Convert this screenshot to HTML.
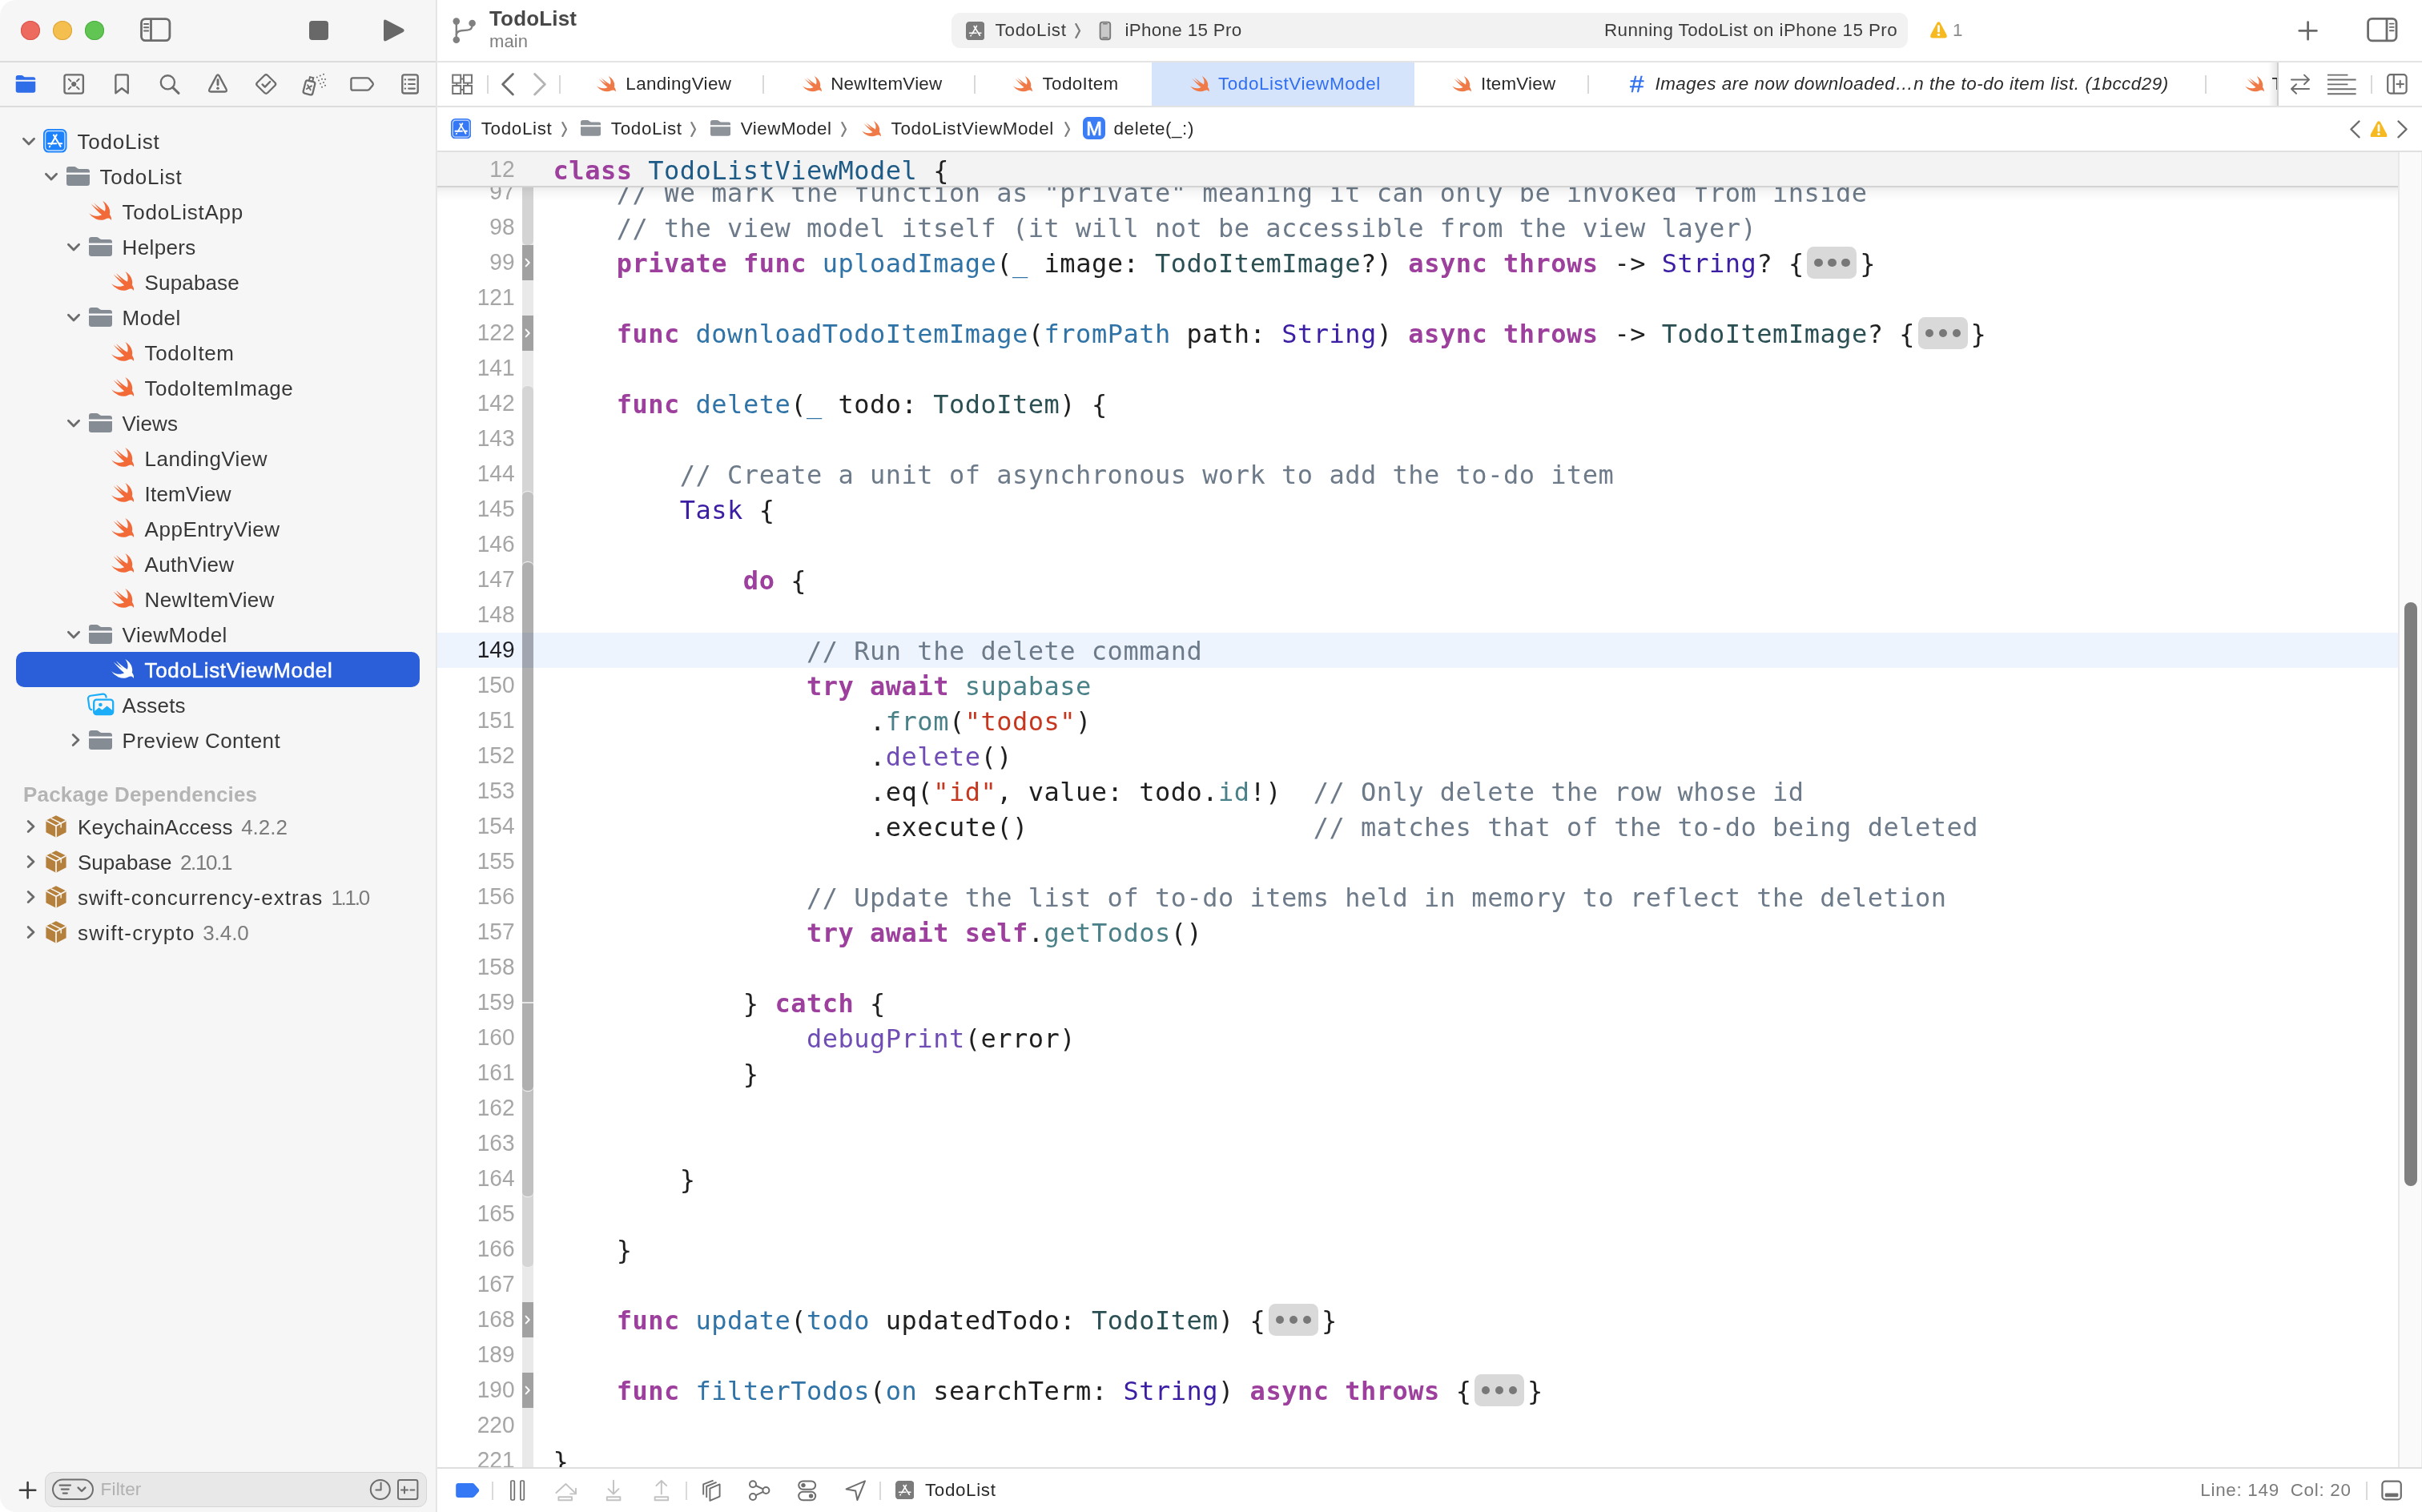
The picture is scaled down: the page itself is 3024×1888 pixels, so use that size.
<!DOCTYPE html>
<html><head><meta charset="utf-8"><title>TodoList — TodoListViewModel.swift</title>
<style>
html,body{margin:0;padding:0;background:#fff}
body{width:3024px;height:1888px;position:relative;overflow:hidden;font-family:"Liberation Sans",sans-serif;color:#262626}
.a{position:absolute;display:block}
.t{position:absolute;white-space:pre;line-height:0;margin-top:-0.3465em}
.box{position:absolute}
/* text classes */
.side{font-size:26px;letter-spacing:.62px;color:#383838}
.sidew{font-size:26px;letter-spacing:.62px;color:#fff;-webkit-text-stroke:.5px #fff}
.ver{font-size:26px;letter-spacing:.3px;color:#7c7c7c}
.pkg{font-size:26px;font-weight:bold;letter-spacing:0px;color:#b4b4b4}
.ui{font-size:22.4px;letter-spacing:.22px;color:#2a2a2a}
.uib{font-size:22.4px;letter-spacing:.22px;color:#2f6ff0}
.uii{font-size:22.4px;font-style:italic;letter-spacing:.26px;color:#2a2a2a}
.pill{font-size:22.4px;letter-spacing:.1px;color:#3d3d3d}
.ttl{font-size:26px;font-weight:bold;color:#484848;letter-spacing:.1px}
.sub{font-size:22px;color:#7f7f7f}
.stat{font-size:22.4px;letter-spacing:.45px;color:#7b7b7b}
.flt{font-size:22.6px;color:#b1b1b1}
.ln{position:absolute;left:560px;width:82.6px;text-align:right;font-size:30.4px;color:#a6a6a6;line-height:44px;height:44px;transform:scaleX(.925);transform-origin:100% 50%}
.ln.cur{color:#1f1f24}
.cl{position:absolute;left:690.6px;height:44px;line-height:44px;white-space:pre;font-family:"DejaVu Sans Mono","Liberation Mono",monospace;font-size:32px;letter-spacing:.506px;color:#1f1f1f}
.k{color:#9d3f9d;font-weight:bold}
.c{color:#6c7a89}
.s{color:#c5371f}
.fd{color:#2f73a7}
.td{color:#1d5a85}
.pt{color:#2b5054}
.pf{color:#4a8188}
.ot{color:#3b1ea3}
.of{color:#6f4db5}
.fp{display:inline-block;vertical-align:top;width:62px;height:40px;margin:1px 3.8px 0 3.7px;border-radius:8.5px;background:#d9d9d9;position:relative}
.fp i{position:absolute;top:15px;width:10.4px;height:10.4px;border-radius:50%;background:#787878}
</style></head><body><div id="w" style="position:absolute;left:0;top:0;width:3024px;height:1888px;will-change:transform">

<div class="box" style="left:0;top:0;width:545px;height:1888px;background:#f6f6f6;border-radius:20px 0 0 20px"></div>
<div class="box" style="left:544px;top:0;width:2px;height:1888px;background:linear-gradient(90deg,#dedede,#ececec)"></div>
<div class="box" style="left:0;top:76px;width:544px;height:2px;background:#dcdcdc"></div>
<div class="box" style="left:546px;top:76px;width:2478px;height:2px;background:#e4e4e4"></div>
<div class="box" style="left:0;top:132px;width:544px;height:2px;background:#dcdcdc"></div>
<div class="box" style="left:26px;top:26px;width:24px;height:24px;border-radius:50%;background:#ed6a5e;box-shadow:inset 0 0 0 1px #d9564b"></div>
<div class="box" style="left:66px;top:26px;width:24px;height:24px;border-radius:50%;background:#f5bf4f;box-shadow:inset 0 0 0 1px #dca53a"></div>
<div class="box" style="left:106px;top:26px;width:24px;height:24px;border-radius:50%;background:#61c554;box-shadow:inset 0 0 0 1px #4fae43"></div>
<svg class="a" style="left:173px;top:20px" width="42" height="34" viewBox="173 20 42 34" ><rect x="176.5" y="23.6" width="35.4" height="27" rx="5" fill="none" stroke="#6c6c6c" stroke-width="2.8"/><path d="M188.5 23.6V50.6" stroke="#6c6c6c" stroke-width="2.8"/><path d="M180 30H185.2M180 34.3H185.2M180 38.6H185.2" stroke="#6c6c6c" stroke-width="2" stroke-linecap="round"/></svg>
<div class="box" style="left:386px;top:26px;width:24px;height:24px;border-radius:4px;background:#686868"></div>
<svg class="a" style="left:476px;top:22px" width="32" height="32" viewBox="476 22 32 32" ><path d="M479 27 V49 Q479 52.6 482.2 51 L503.4 40 Q505.8 38 503.4 36 L482.2 25 Q479 23.4 479 27Z" fill="#686868"/></svg>
<svg class="a" style="left:19px;top:94.2px" width="26" height="21.8" viewBox="0 0 27 24" ><path d="M0 4.4V3Q0 0 3 0H7.6Q9.2 0 10.3 1L11.2 1.8Q12 2.5 13.4 2.5H24Q27 2.5 27 5.5V6.2H0Z" fill="#2f6de9"/><path d="M0 8.4H27V21Q27 24 24 24H3Q0 24 0 21Z" fill="#2f6de9"/></svg>
<svg class="a" style="left:78px;top:91px" width="29" height="28" viewBox="78 91 29 28" ><rect x="80.5" y="93.4" width="23.4" height="23.2" rx="2.6" fill="none" stroke="#6d6d6d" stroke-width="2.35"/><circle cx="92.2" cy="105" r="3.1" fill="#6d6d6d"/><path d="M85.8 98.8 L88.4 101.4 M98.6 98.8 L96 101.4 M85.8 111.2 L88.4 108.6 M98.6 111.2 L96 108.6" stroke="#6d6d6d" stroke-width="2" stroke-linecap="round"/></svg>
<svg class="a" style="left:141px;top:90px" width="22" height="30" viewBox="141 90 22 30" ><path d="M144.4 116.2 V95.4 Q144.4 93.4 146.4 93.4 H157.8 Q159.8 93.4 159.8 95.4 V116.2 L152.1 110.2 Z" fill="none" stroke="#6d6d6d" stroke-width="2.35" stroke-linejoin="round"/></svg>
<svg class="a" style="left:198px;top:91px" width="28" height="28" viewBox="198 91 28 28" ><circle cx="209.4" cy="102.8" r="8.6" fill="none" stroke="#6d6d6d" stroke-width="2.35"/><path d="M215.8 109.4 L223 116.4" stroke="#6d6d6d" stroke-width="3" stroke-linecap="round"/></svg>
<svg class="a" style="left:258px;top:90px" width="28" height="28" viewBox="258 90 28 28" ><path d="M270.4 94.6 Q272 92 273.6 94.6 L282.5 111.4 Q283.9 114.5 280.8 114.5 H263.2 Q260.1 114.5 261.5 111.4 Z" fill="none" stroke="#6d6d6d" stroke-width="2.3" stroke-linejoin="round"/><path d="M272 99.8 V105.8" stroke="#6d6d6d" stroke-width="2.9" stroke-linecap="round"/><circle cx="272" cy="110.2" r="1.75" fill="#6d6d6d"/></svg>
<svg class="a" style="left:317px;top:90px" width="30" height="30" viewBox="317 90 30 30" ><path d="M330.4 94 Q332.2 92.4 334 94 L343.4 103.2 Q345 105 343.4 106.8 L334 116 Q332.2 117.6 330.4 116 L321 106.8 Q319.4 105 321 103.2 Z" fill="none" stroke="#6d6d6d" stroke-width="2.3" stroke-linejoin="round"/><path d="M327.6 105.4 L330.8 108.6 L337.2 102" fill="none" stroke="#6d6d6d" stroke-width="2.4" stroke-linecap="round" stroke-linejoin="round"/></svg>
<svg class="a" style="left:376px;top:90px" width="34" height="30" viewBox="376 90 34 30" ><g transform="rotate(14 386 106) translate(0.8 0.6)"><rect x="380" y="100.4" width="12" height="16.6" rx="2.6" fill="none" stroke="#6d6d6d" stroke-width="2.3"/><rect x="383.8" y="95.6" width="4.4" height="4.8" fill="none" stroke="#6d6d6d" stroke-width="2"/><path d="M383.4 106 L388.4 111 M388.4 106 L383.4 111" stroke="#6d6d6d" stroke-width="1.9" stroke-linecap="round"/></g><g fill="#6d6d6d"><circle cx="395.8" cy="96.6" r="1"/><circle cx="399.8" cy="94.6" r="1"/><circle cx="404" cy="92.8" r="1"/><circle cx="398" cy="100.4" r="1"/><circle cx="402" cy="98.8" r="1"/><circle cx="406" cy="99" r="1"/><circle cx="400" cy="104.6" r="1"/><circle cx="404" cy="103" r="1"/><circle cx="406" cy="106.8" r="1"/><circle cx="402" cy="108.8" r="1"/></g></svg>
<svg class="a" style="left:435px;top:94px" width="34" height="22" viewBox="435 94 34 22" ><path d="M440.6 97.4 H458.8 Q460.4 97.4 461.4 98.7 L465.4 103.6 Q466.4 105 465.4 106.4 L461.4 111.3 Q460.4 112.6 458.8 112.6 H440.6 Q438.4 112.6 438.4 110.4 V99.6 Q438.4 97.4 440.6 97.4 Z" fill="none" stroke="#6d6d6d" stroke-width="2.35" stroke-linejoin="round"/></svg>
<svg class="a" style="left:499px;top:90px" width="26" height="30" viewBox="499 90 26 30" ><rect x="502.3" y="93.3" width="19.4" height="23.2" rx="2.6" fill="none" stroke="#6d6d6d" stroke-width="2.35"/><path d="M510.2 99.4H517.8M510.2 105H517.8M510.2 110.6H517.8" stroke="#6d6d6d" stroke-width="2.2" stroke-linecap="round"/><path d="M505.8 99.4H506M505.8 105H506M505.8 110.6H506" stroke="#6d6d6d" stroke-width="2.3" stroke-linecap="round"/></svg>
<svg class="a" style="left:27px;top:171px" width="18" height="12" viewBox="0 0 18 12" ><path d="M2.4 2.2 L9 9 L15.6 2.2" fill="none" stroke="#6b6b6b" stroke-width="2.8" stroke-linecap="round" stroke-linejoin="round"/></svg>
<svg class="a" style="left:54.2px;top:161px" width="29.5" height="29.5" viewBox="0 0 30 30" ><rect x="0" y="0" width="30" height="30" rx="6.5" fill="#1b82fc"/><rect x="2.6" y="2.6" width="24.8" height="24.8" rx="4.2" fill="none" stroke="#fff" stroke-opacity=".75" stroke-width="1.4"/><g stroke="#fff" stroke-width="2.1" stroke-linecap="round" fill="none"><path d="M17 7.4 L10.2 19.4"/><path d="M13.3 7.8 L21.9 22.2"/><path d="M6.4 18.6 H16.6"/><path d="M20.4 18.6 H23.6"/><path d="M8.4 22 L8.0 22.7"/></g></svg>
<div class="t side" style="left:96.60px;top:186px;letter-spacing:0.750px;">TodoList</div>
<svg class="a" style="left:55px;top:215px" width="18" height="12" viewBox="0 0 18 12" ><path d="M2.4 2.2 L9 9 L15.6 2.2" fill="none" stroke="#6b6b6b" stroke-width="2.8" stroke-linecap="round" stroke-linejoin="round"/></svg>
<svg class="a" style="left:83px;top:208px" width="29" height="24" viewBox="0 0 29 24" preserveAspectRatio="none"><path d="M0 5.2V3.2Q0 0 3.2 0H9.3Q11 0 12.2 1.1L13.3 2.1Q14.2 2.9 15.6 2.9H25.8Q29 2.9 29 6.1V7.5H0Z" fill="#868c93"/><path d="M0 9.9H29V20.8Q29 24 25.8 24H3.2Q0 24 0 20.8Z" fill="#868c93"/></svg>
<div class="t side" style="left:124.60px;top:230px;letter-spacing:0.750px;">TodoList</div>
<svg class="a" style="left:110.8px;top:250.8px" width="28.3" height="24.6" viewBox="2.35 3.35 18.3 16.8" preserveAspectRatio="none"><path d="M13.543 3.41c4.114 2.47 6.545 7.162 5.549 11.131-.024.093-.05.181-.076.272l.002.001c2.062 2.538 1.5 5.258 1.236 4.745-1.072-2.086-3.066-1.568-4.088-1.043a6.803 6.803 0 0 1-.281.158l-.02.012-.002.002c-2.115 1.123-4.957 1.205-7.812-.022a12.568 12.568 0 0 1-5.64-4.838c.649.48 1.35.902 2.097 1.252 3.019 1.414 6.051 1.311 8.197-.002C9.651 12.73 7.101 9.67 5.146 7.191a10.628 10.628 0 0 1-1.005-1.384c2.34 2.142 6.038 4.83 7.365 5.576C8.69 8.408 6.208 4.743 6.324 4.86c4.436 4.47 8.528 6.996 8.528 6.996.154.085.27.154.36.213.085-.215.16-.437.224-.668.708-2.588-.09-5.548-1.893-7.992z" fill="#f26a38"/></svg>
<div class="t side" style="left:152.60px;top:274px;letter-spacing:0.750px;">TodoListApp</div>
<svg class="a" style="left:83px;top:303px" width="18" height="12" viewBox="0 0 18 12" ><path d="M2.4 2.2 L9 9 L15.6 2.2" fill="none" stroke="#6b6b6b" stroke-width="2.8" stroke-linecap="round" stroke-linejoin="round"/></svg>
<svg class="a" style="left:111px;top:296px" width="29" height="24" viewBox="0 0 29 24" preserveAspectRatio="none"><path d="M0 5.2V3.2Q0 0 3.2 0H9.3Q11 0 12.2 1.1L13.3 2.1Q14.2 2.9 15.6 2.9H25.8Q29 2.9 29 6.1V7.5H0Z" fill="#868c93"/><path d="M0 9.9H29V20.8Q29 24 25.8 24H3.2Q0 24 0 20.8Z" fill="#868c93"/></svg>
<div class="t side" style="left:152.60px;top:318px;letter-spacing:0.351px;">Helpers</div>
<svg class="a" style="left:138.8px;top:338.8px" width="28.3" height="24.6" viewBox="2.35 3.35 18.3 16.8" preserveAspectRatio="none"><path d="M13.543 3.41c4.114 2.47 6.545 7.162 5.549 11.131-.024.093-.05.181-.076.272l.002.001c2.062 2.538 1.5 5.258 1.236 4.745-1.072-2.086-3.066-1.568-4.088-1.043a6.803 6.803 0 0 1-.281.158l-.02.012-.002.002c-2.115 1.123-4.957 1.205-7.812-.022a12.568 12.568 0 0 1-5.64-4.838c.649.48 1.35.902 2.097 1.252 3.019 1.414 6.051 1.311 8.197-.002C9.651 12.73 7.101 9.67 5.146 7.191a10.628 10.628 0 0 1-1.005-1.384c2.34 2.142 6.038 4.83 7.365 5.576C8.69 8.408 6.208 4.743 6.324 4.86c4.436 4.47 8.528 6.996 8.528 6.996.154.085.27.154.36.213.085-.215.16-.437.224-.668.708-2.588-.09-5.548-1.893-7.992z" fill="#f26a38"/></svg>
<div class="t side" style="left:180.60px;top:362px;letter-spacing:0.142px;">Supabase</div>
<svg class="a" style="left:83px;top:391px" width="18" height="12" viewBox="0 0 18 12" ><path d="M2.4 2.2 L9 9 L15.6 2.2" fill="none" stroke="#6b6b6b" stroke-width="2.8" stroke-linecap="round" stroke-linejoin="round"/></svg>
<svg class="a" style="left:111px;top:384px" width="29" height="24" viewBox="0 0 29 24" preserveAspectRatio="none"><path d="M0 5.2V3.2Q0 0 3.2 0H9.3Q11 0 12.2 1.1L13.3 2.1Q14.2 2.9 15.6 2.9H25.8Q29 2.9 29 6.1V7.5H0Z" fill="#868c93"/><path d="M0 9.9H29V20.8Q29 24 25.8 24H3.2Q0 24 0 20.8Z" fill="#868c93"/></svg>
<div class="t side" style="left:152.60px;top:406px;letter-spacing:0.469px;">Model</div>
<svg class="a" style="left:138.8px;top:426.8px" width="28.3" height="24.6" viewBox="2.35 3.35 18.3 16.8" preserveAspectRatio="none"><path d="M13.543 3.41c4.114 2.47 6.545 7.162 5.549 11.131-.024.093-.05.181-.076.272l.002.001c2.062 2.538 1.5 5.258 1.236 4.745-1.072-2.086-3.066-1.568-4.088-1.043a6.803 6.803 0 0 1-.281.158l-.02.012-.002.002c-2.115 1.123-4.957 1.205-7.812-.022a12.568 12.568 0 0 1-5.64-4.838c.649.48 1.35.902 2.097 1.252 3.019 1.414 6.051 1.311 8.197-.002C9.651 12.73 7.101 9.67 5.146 7.191a10.628 10.628 0 0 1-1.005-1.384c2.34 2.142 6.038 4.83 7.365 5.576C8.69 8.408 6.208 4.743 6.324 4.86c4.436 4.47 8.528 6.996 8.528 6.996.154.085.27.154.36.213.085-.215.16-.437.224-.668.708-2.588-.09-5.548-1.893-7.992z" fill="#f26a38"/></svg>
<div class="t side" style="left:180.60px;top:450px;letter-spacing:0.637px;">TodoItem</div>
<svg class="a" style="left:138.8px;top:470.8px" width="28.3" height="24.6" viewBox="2.35 3.35 18.3 16.8" preserveAspectRatio="none"><path d="M13.543 3.41c4.114 2.47 6.545 7.162 5.549 11.131-.024.093-.05.181-.076.272l.002.001c2.062 2.538 1.5 5.258 1.236 4.745-1.072-2.086-3.066-1.568-4.088-1.043a6.803 6.803 0 0 1-.281.158l-.02.012-.002.002c-2.115 1.123-4.957 1.205-7.812-.022a12.568 12.568 0 0 1-5.64-4.838c.649.48 1.35.902 2.097 1.252 3.019 1.414 6.051 1.311 8.197-.002C9.651 12.73 7.101 9.67 5.146 7.191a10.628 10.628 0 0 1-1.005-1.384c2.34 2.142 6.038 4.83 7.365 5.576C8.69 8.408 6.208 4.743 6.324 4.86c4.436 4.47 8.528 6.996 8.528 6.996.154.085.27.154.36.213.085-.215.16-.437.224-.668.708-2.588-.09-5.548-1.893-7.992z" fill="#f26a38"/></svg>
<div class="t side" style="left:180.60px;top:494px;letter-spacing:0.499px;">TodoItemImage</div>
<svg class="a" style="left:83px;top:523px" width="18" height="12" viewBox="0 0 18 12" ><path d="M2.4 2.2 L9 9 L15.6 2.2" fill="none" stroke="#6b6b6b" stroke-width="2.8" stroke-linecap="round" stroke-linejoin="round"/></svg>
<svg class="a" style="left:111px;top:516px" width="29" height="24" viewBox="0 0 29 24" preserveAspectRatio="none"><path d="M0 5.2V3.2Q0 0 3.2 0H9.3Q11 0 12.2 1.1L13.3 2.1Q14.2 2.9 15.6 2.9H25.8Q29 2.9 29 6.1V7.5H0Z" fill="#868c93"/><path d="M0 9.9H29V20.8Q29 24 25.8 24H3.2Q0 24 0 20.8Z" fill="#868c93"/></svg>
<div class="t side" style="left:152.60px;top:538px;letter-spacing:0.132px;">Views</div>
<svg class="a" style="left:138.8px;top:558.8px" width="28.3" height="24.6" viewBox="2.35 3.35 18.3 16.8" preserveAspectRatio="none"><path d="M13.543 3.41c4.114 2.47 6.545 7.162 5.549 11.131-.024.093-.05.181-.076.272l.002.001c2.062 2.538 1.5 5.258 1.236 4.745-1.072-2.086-3.066-1.568-4.088-1.043a6.803 6.803 0 0 1-.281.158l-.02.012-.002.002c-2.115 1.123-4.957 1.205-7.812-.022a12.568 12.568 0 0 1-5.64-4.838c.649.48 1.35.902 2.097 1.252 3.019 1.414 6.051 1.311 8.197-.002C9.651 12.73 7.101 9.67 5.146 7.191a10.628 10.628 0 0 1-1.005-1.384c2.34 2.142 6.038 4.83 7.365 5.576C8.69 8.408 6.208 4.743 6.324 4.86c4.436 4.47 8.528 6.996 8.528 6.996.154.085.27.154.36.213.085-.215.16-.437.224-.668.708-2.588-.09-5.548-1.893-7.992z" fill="#f26a38"/></svg>
<div class="t side" style="left:180.60px;top:582px;letter-spacing:0.451px;">LandingView</div>
<svg class="a" style="left:138.8px;top:602.8px" width="28.3" height="24.6" viewBox="2.35 3.35 18.3 16.8" preserveAspectRatio="none"><path d="M13.543 3.41c4.114 2.47 6.545 7.162 5.549 11.131-.024.093-.05.181-.076.272l.002.001c2.062 2.538 1.5 5.258 1.236 4.745-1.072-2.086-3.066-1.568-4.088-1.043a6.803 6.803 0 0 1-.281.158l-.02.012-.002.002c-2.115 1.123-4.957 1.205-7.812-.022a12.568 12.568 0 0 1-5.64-4.838c.649.48 1.35.902 2.097 1.252 3.019 1.414 6.051 1.311 8.197-.002C9.651 12.73 7.101 9.67 5.146 7.191a10.628 10.628 0 0 1-1.005-1.384c2.34 2.142 6.038 4.83 7.365 5.576C8.69 8.408 6.208 4.743 6.324 4.86c4.436 4.47 8.528 6.996 8.528 6.996.154.085.27.154.36.213.085-.215.16-.437.224-.668.708-2.588-.09-5.548-1.893-7.992z" fill="#f26a38"/></svg>
<div class="t side" style="left:180.60px;top:626px;letter-spacing:0.197px;">ItemView</div>
<svg class="a" style="left:138.8px;top:646.8px" width="28.3" height="24.6" viewBox="2.35 3.35 18.3 16.8" preserveAspectRatio="none"><path d="M13.543 3.41c4.114 2.47 6.545 7.162 5.549 11.131-.024.093-.05.181-.076.272l.002.001c2.062 2.538 1.5 5.258 1.236 4.745-1.072-2.086-3.066-1.568-4.088-1.043a6.803 6.803 0 0 1-.281.158l-.02.012-.002.002c-2.115 1.123-4.957 1.205-7.812-.022a12.568 12.568 0 0 1-5.64-4.838c.649.48 1.35.902 2.097 1.252 3.019 1.414 6.051 1.311 8.197-.002C9.651 12.73 7.101 9.67 5.146 7.191a10.628 10.628 0 0 1-1.005-1.384c2.34 2.142 6.038 4.83 7.365 5.576C8.69 8.408 6.208 4.743 6.324 4.86c4.436 4.47 8.528 6.996 8.528 6.996.154.085.27.154.36.213.085-.215.16-.437.224-.668.708-2.588-.09-5.548-1.893-7.992z" fill="#f26a38"/></svg>
<div class="t side" style="left:180.60px;top:670px;letter-spacing:0.517px;">AppEntryView</div>
<svg class="a" style="left:138.8px;top:690.8px" width="28.3" height="24.6" viewBox="2.35 3.35 18.3 16.8" preserveAspectRatio="none"><path d="M13.543 3.41c4.114 2.47 6.545 7.162 5.549 11.131-.024.093-.05.181-.076.272l.002.001c2.062 2.538 1.5 5.258 1.236 4.745-1.072-2.086-3.066-1.568-4.088-1.043a6.803 6.803 0 0 1-.281.158l-.02.012-.002.002c-2.115 1.123-4.957 1.205-7.812-.022a12.568 12.568 0 0 1-5.64-4.838c.649.48 1.35.902 2.097 1.252 3.019 1.414 6.051 1.311 8.197-.002C9.651 12.73 7.101 9.67 5.146 7.191a10.628 10.628 0 0 1-1.005-1.384c2.34 2.142 6.038 4.83 7.365 5.576C8.69 8.408 6.208 4.743 6.324 4.86c4.436 4.47 8.528 6.996 8.528 6.996.154.085.27.154.36.213.085-.215.16-.437.224-.668.708-2.588-.09-5.548-1.893-7.992z" fill="#f26a38"/></svg>
<div class="t side" style="left:180.60px;top:714px;letter-spacing:0.295px;">AuthView</div>
<svg class="a" style="left:138.8px;top:734.8px" width="28.3" height="24.6" viewBox="2.35 3.35 18.3 16.8" preserveAspectRatio="none"><path d="M13.543 3.41c4.114 2.47 6.545 7.162 5.549 11.131-.024.093-.05.181-.076.272l.002.001c2.062 2.538 1.5 5.258 1.236 4.745-1.072-2.086-3.066-1.568-4.088-1.043a6.803 6.803 0 0 1-.281.158l-.02.012-.002.002c-2.115 1.123-4.957 1.205-7.812-.022a12.568 12.568 0 0 1-5.64-4.838c.649.48 1.35.902 2.097 1.252 3.019 1.414 6.051 1.311 8.197-.002C9.651 12.73 7.101 9.67 5.146 7.191a10.628 10.628 0 0 1-1.005-1.384c2.34 2.142 6.038 4.83 7.365 5.576C8.69 8.408 6.208 4.743 6.324 4.86c4.436 4.47 8.528 6.996 8.528 6.996.154.085.27.154.36.213.085-.215.16-.437.224-.668.708-2.588-.09-5.548-1.893-7.992z" fill="#f26a38"/></svg>
<div class="t side" style="left:180.60px;top:758px;letter-spacing:0.325px;">NewItemView</div>
<svg class="a" style="left:83px;top:787px" width="18" height="12" viewBox="0 0 18 12" ><path d="M2.4 2.2 L9 9 L15.6 2.2" fill="none" stroke="#6b6b6b" stroke-width="2.8" stroke-linecap="round" stroke-linejoin="round"/></svg>
<svg class="a" style="left:111px;top:780px" width="29" height="24" viewBox="0 0 29 24" preserveAspectRatio="none"><path d="M0 5.2V3.2Q0 0 3.2 0H9.3Q11 0 12.2 1.1L13.3 2.1Q14.2 2.9 15.6 2.9H25.8Q29 2.9 29 6.1V7.5H0Z" fill="#868c93"/><path d="M0 9.9H29V20.8Q29 24 25.8 24H3.2Q0 24 0 20.8Z" fill="#868c93"/></svg>
<div class="t side" style="left:152.60px;top:802px;letter-spacing:0.513px;">ViewModel</div>
<div class="box" style="left:20px;top:814px;width:504px;height:44px;border-radius:10px;background:#2b5fda"></div>
<svg class="a" style="left:138.8px;top:822.8px" width="28.3" height="24.6" viewBox="2.35 3.35 18.3 16.8" preserveAspectRatio="none"><path d="M13.543 3.41c4.114 2.47 6.545 7.162 5.549 11.131-.024.093-.05.181-.076.272l.002.001c2.062 2.538 1.5 5.258 1.236 4.745-1.072-2.086-3.066-1.568-4.088-1.043a6.803 6.803 0 0 1-.281.158l-.02.012-.002.002c-2.115 1.123-4.957 1.205-7.812-.022a12.568 12.568 0 0 1-5.64-4.838c.649.48 1.35.902 2.097 1.252 3.019 1.414 6.051 1.311 8.197-.002C9.651 12.73 7.101 9.67 5.146 7.191a10.628 10.628 0 0 1-1.005-1.384c2.34 2.142 6.038 4.83 7.365 5.576C8.69 8.408 6.208 4.743 6.324 4.86c4.436 4.47 8.528 6.996 8.528 6.996.154.085.27.154.36.213.085-.215.16-.437.224-.668.708-2.588-.09-5.548-1.893-7.992z" fill="#fff"/></svg>
<div class="t sidew" style="left:180.60px;top:846px;letter-spacing:0.659px;">TodoListViewModel</div>
<svg class="a" style="left:109px;top:865px" width="35" height="30" viewBox="0 0 35 30" ><rect x="1.6" y="2.6" width="22.6" height="17.6" rx="3.6" fill="#f6f6f6" stroke="#1badf8" stroke-width="2.2" transform="rotate(-8 13 11)"/><rect x="8.2" y="8.6" width="24" height="18.6" rx="3.4" fill="#dff3fe" stroke="#f6f6f6" stroke-width="4"/><rect x="8.2" y="8.6" width="24" height="18.6" rx="3.4" fill="#f6f6f6" stroke="#1badf8" stroke-width="2.3"/><circle cx="16.4" cy="15" r="2.3" fill="#1badf8"/><path d="M8.4 23.6 L14.6 18.6 L18.6 21.6 L24.6 16.4 L32 22.6 V25 Q32 27.2 29.8 27.2 H10.6 Q8.4 27.2 8.4 25Z" fill="#1badf8"/></svg>
<div class="t side" style="left:152.60px;top:890px;letter-spacing:0.195px;">Assets</div>
<svg class="a" style="left:88.5px;top:915px" width="12" height="18" viewBox="0 0 12 18" ><path d="M2.2 2.4 L9 9 L2.2 15.6" fill="none" stroke="#6b6b6b" stroke-width="2.8" stroke-linecap="round" stroke-linejoin="round"/></svg>
<svg class="a" style="left:111px;top:912px" width="29" height="24" viewBox="0 0 29 24" preserveAspectRatio="none"><path d="M0 5.2V3.2Q0 0 3.2 0H9.3Q11 0 12.2 1.1L13.3 2.1Q14.2 2.9 15.6 2.9H25.8Q29 2.9 29 6.1V7.5H0Z" fill="#868c93"/><path d="M0 9.9H29V20.8Q29 24 25.8 24H3.2Q0 24 0 20.8Z" fill="#868c93"/></svg>
<div class="t side" style="left:152.60px;top:934px;letter-spacing:0.453px;">Preview Content</div>
<div class="t pkg" style="left:29.10px;top:1001px;letter-spacing:0.150px;">Package Dependencies</div>
<svg class="a" style="left:32.6px;top:1023px" width="12" height="18" viewBox="0 0 12 18" ><path d="M2.2 2.4 L9 9 L2.2 15.6" fill="none" stroke="#6b6b6b" stroke-width="2.8" stroke-linecap="round" stroke-linejoin="round"/></svg>
<svg class="a" style="left:56px;top:1017px" width="28" height="30" viewBox="0 0 28 30" ><path d="M14 1.2 L26.6 7.6 V22.2 L14 28.8 L1.4 22.2 V7.6 Z" fill="#b5803c"/><path d="M1.4 7.6 L14 14.2 L26.6 7.6 M14 14.2 V28.8" fill="none" stroke="#f6f6f6" stroke-width="1.7"/><path d="M7.4 4.6 L20.2 11 V16.4" fill="none" stroke="#f6f6f6" stroke-width="1.5"/></svg>
<div class="t side" style="left:96.90px;top:1042px;letter-spacing:0.218px;">KeychainAccess</div>
<div class="t ver" style="left:301.20px;top:1042px;letter-spacing:-0.031px;">4.2.2</div>
<svg class="a" style="left:32.6px;top:1067px" width="12" height="18" viewBox="0 0 12 18" ><path d="M2.2 2.4 L9 9 L2.2 15.6" fill="none" stroke="#6b6b6b" stroke-width="2.8" stroke-linecap="round" stroke-linejoin="round"/></svg>
<svg class="a" style="left:56px;top:1061px" width="28" height="30" viewBox="0 0 28 30" ><path d="M14 1.2 L26.6 7.6 V22.2 L14 28.8 L1.4 22.2 V7.6 Z" fill="#b5803c"/><path d="M1.4 7.6 L14 14.2 L26.6 7.6 M14 14.2 V28.8" fill="none" stroke="#f6f6f6" stroke-width="1.7"/><path d="M7.4 4.6 L20.2 11 V16.4" fill="none" stroke="#f6f6f6" stroke-width="1.5"/></svg>
<div class="t side" style="left:96.90px;top:1086px;letter-spacing:0.071px;">Supabase</div>
<div class="t ver" style="left:225.00px;top:1086px;letter-spacing:-1.356px;">2.10.1</div>
<svg class="a" style="left:32.6px;top:1111px" width="12" height="18" viewBox="0 0 12 18" ><path d="M2.2 2.4 L9 9 L2.2 15.6" fill="none" stroke="#6b6b6b" stroke-width="2.8" stroke-linecap="round" stroke-linejoin="round"/></svg>
<svg class="a" style="left:56px;top:1105px" width="28" height="30" viewBox="0 0 28 30" ><path d="M14 1.2 L26.6 7.6 V22.2 L14 28.8 L1.4 22.2 V7.6 Z" fill="#b5803c"/><path d="M1.4 7.6 L14 14.2 L26.6 7.6 M14 14.2 V28.8" fill="none" stroke="#f6f6f6" stroke-width="1.7"/><path d="M7.4 4.6 L20.2 11 V16.4" fill="none" stroke="#f6f6f6" stroke-width="1.5"/></svg>
<div class="t side" style="left:96.90px;top:1130px;letter-spacing:1.025px;">swift-concurrency-extras</div>
<div class="t ver" style="left:413.40px;top:1130px;letter-spacing:-2.256px;">1.1.0</div>
<svg class="a" style="left:32.6px;top:1155px" width="12" height="18" viewBox="0 0 12 18" ><path d="M2.2 2.4 L9 9 L2.2 15.6" fill="none" stroke="#6b6b6b" stroke-width="2.8" stroke-linecap="round" stroke-linejoin="round"/></svg>
<svg class="a" style="left:56px;top:1149px" width="28" height="30" viewBox="0 0 28 30" ><path d="M14 1.2 L26.6 7.6 V22.2 L14 28.8 L1.4 22.2 V7.6 Z" fill="#b5803c"/><path d="M1.4 7.6 L14 14.2 L26.6 7.6 M14 14.2 V28.8" fill="none" stroke="#f6f6f6" stroke-width="1.7"/><path d="M7.4 4.6 L20.2 11 V16.4" fill="none" stroke="#f6f6f6" stroke-width="1.5"/></svg>
<div class="t side" style="left:96.90px;top:1174px;letter-spacing:1.277px;">swift-crypto</div>
<div class="t ver" style="left:253.20px;top:1174px;letter-spacing:-0.056px;">3.4.0</div>
<svg class="a" style="left:22px;top:1848px" width="26" height="26" viewBox="22 1848 26 26" ><path d="M34.6 1851 V1870.4 M24.9 1860.7 H44.3" stroke="#3d3d3d" stroke-width="2.6" stroke-linecap="round"/></svg>
<div class="box" style="left:56px;top:1838px;width:477px;height:44px;box-sizing:border-box;border:1.5px solid #d6d6d6;border-radius:11px;background:#e8e8e8"></div>
<svg class="a" style="left:64px;top:1846px" width="54" height="28" viewBox="64 1846 54 28" ><rect x="66" y="1847.6" width="50" height="24.4" rx="12.2" fill="none" stroke="#6d6d6d" stroke-width="2"/><path d="M74.6 1854.6 H88 M76.8 1859.6 H85.8 M78.8 1864.6 H83.8" stroke="#6d6d6d" stroke-width="2.2" stroke-linecap="round"/><path d="M97.6 1857.6 L102 1862 L106.4 1857.6" fill="none" stroke="#6d6d6d" stroke-width="2.4" stroke-linecap="round" stroke-linejoin="round"/></svg>
<div class="t flt" style="left:125.60px;top:1867.5px;letter-spacing:0.117px;">Filter</div>
<svg class="a" style="left:460px;top:1845px" width="30" height="30" viewBox="460 1845 30 30" ><circle cx="474.8" cy="1860" r="12" fill="none" stroke="#6d6d6d" stroke-width="2"/><path d="M475.6 1851.6 V1860.6 H469.4" fill="none" stroke="#6d6d6d" stroke-width="2" stroke-linecap="round" stroke-linejoin="round"/></svg>
<svg class="a" style="left:494px;top:1845px" width="30" height="30" viewBox="494 1845 30 30" ><rect x="497" y="1848" width="24.4" height="24" rx="2.4" fill="none" stroke="#6d6d6d" stroke-width="2"/><path d="M501 1860.4 H509 M505 1856.4 V1864.4 M512.4 1860.4 H517.4" stroke="#6d6d6d" stroke-width="2" stroke-linecap="round"/></svg>
<svg class="a" style="left:562px;top:18px" width="36" height="42" viewBox="562 18 36 42" ><g fill="#808080"><circle cx="569.8" cy="26.6" r="4.3"/><circle cx="569.8" cy="49.8" r="4.3"/><circle cx="589.6" cy="29" r="4.3"/></g><path d="M569.8 26.6 V49.8" stroke="#808080" stroke-width="2.4" fill="none"/><path d="M589.6 29 V31.6 Q589.6 37.2 583.4 37.6 L576.2 38.2 Q569.8 38.8 569.8 44" stroke="#808080" stroke-width="2.4" fill="none"/></svg>
<div class="t ttl" style="left:611.00px;top:31.8px;letter-spacing:0.168px;">TodoList</div>
<div class="t sub" style="left:611.00px;top:59.8px;letter-spacing:0.101px;">main</div>
<div class="box" style="left:1188px;top:16px;width:1194px;height:44px;border-radius:11px;background:#f2f2f2"></div>
<svg class="a" style="left:1205.8px;top:26.6px" width="23.4" height="23.4" viewBox="0 0 30 30" ><rect x="0" y="0" width="30" height="30" rx="5.6" fill="#7b7b7b"/><g stroke="#fff" stroke-width="2.1" stroke-linecap="round" fill="none"><path d="M17.3 6.9 L10.1 19.4"/><path d="M13 7.3 L22.3 22.1"/><path d="M5.8 18.3 H16.6"/><path d="M20.6 18.3 H24.2"/><path d="M8.2 22 L7.7 22.8"/></g></svg>
<div class="t pill" style="left:1242.60px;top:45.8px;letter-spacing:0.709px;">TodoList</div>
<svg class="a" style="left:1342px;top:28.9px" width="7.6" height="19" viewBox="0 0 7.6 19" ><path d="M1.4 1 L6.0 9.5 L1.4 18" fill="none" stroke="#7c7c7c" stroke-width="2.3" stroke-linecap="round" stroke-linejoin="round"/></svg>
<svg class="a" style="left:1371px;top:25px" width="18" height="27" viewBox="1371 25 18 27" ><rect x="1373.6" y="27.6" width="12.6" height="21.6" rx="3" fill="#c9c9c9" stroke="#7b7b7b" stroke-width="1.9"/><path d="M1377.6 29.8 H1382.2 M1377 47 H1382.8" stroke="#7b7b7b" stroke-width="1.4" stroke-linecap="round"/></svg>
<div class="t pill" style="left:1404.60px;top:45.8px;letter-spacing:0.302px;">iPhone 15 Pro</div>
<div class="t pill" style="left:2002.90px;top:45.8px;letter-spacing:0.434px;">Running TodoList on iPhone 15 Pro</div>
<svg class="a" style="left:2409.6px;top:27.4px" width="21" height="20.4" viewBox="0 0 21 20.4" ><path d="M8.5 1.6 Q10.5 -1.2 12.5 1.6 L20.3 16 Q21.9 20.4 17.9 20.4 H3.1 Q-0.9 20.4 0.7 16 Z" fill="#f6b91f"/><path d="M10.5 5.6 V12.2" stroke="#fff" stroke-width="2.7" stroke-linecap="round"/><circle cx="10.5" cy="16.3" r="1.65" fill="#fff"/></svg>
<div class="t pill" style="left:2438.00px;top:45.8px;color:#8b8b8b;">1</div>
<svg class="a" style="left:2868px;top:25px" width="28" height="28" viewBox="2868 25 28 28" ><path d="M2881.6 27.6 V49.2 M2870.8 38.4 H2892.4" stroke="#6a6a6a" stroke-width="2.8" stroke-linecap="round"/></svg>
<svg class="a" style="left:2952px;top:19px" width="44" height="36" viewBox="2952 19 44 36" ><rect x="2956.6" y="23.4" width="35.4" height="27.4" rx="5" fill="none" stroke="#6c6c6c" stroke-width="2.8"/><path d="M2980 23.4V50.8" stroke="#6c6c6c" stroke-width="2.8"/><path d="M2983.8 29.6H2988.6M2983.8 33.9H2988.6M2983.8 38.3H2988.6" stroke="#6c6c6c" stroke-width="1.9" stroke-linecap="round"/></svg>
<div class="box" style="left:546px;top:132px;width:2478px;height:2px;background:#e2e2e2"></div>
<svg class="a" style="left:562px;top:90px" width="30" height="30" viewBox="562 90 30 30" ><g fill="none" stroke="#757575" stroke-width="2"><rect x="565.2" y="93.6" width="10" height="10"/><rect x="579" y="93.6" width="10" height="10"/><rect x="565.2" y="107" width="10" height="10"/><rect x="579" y="107" width="10" height="10"/><path d="M575.2 98.6H579 M584 103.6V107 M575.2 112H579 M570.2 103.6V107"/></g></svg>
<div class="box" style="left:608px;top:93.5px;width:2px;height:23.200000000000003px;background:#d8d8d8"></div>
<svg class="a" style="left:622px;top:88px" width="24" height="34" viewBox="622 88 24 34" ><path d="M640.4 92.4 L627.6 105.2 L640.4 118" fill="none" stroke="#6d6d6d" stroke-width="2.8" stroke-linecap="round" stroke-linejoin="round"/></svg>
<svg class="a" style="left:662px;top:88px" width="24" height="34" viewBox="662 88 24 34" ><path d="M667.6 92.4 L680.4 105.2 L667.6 118" fill="none" stroke="#b4b4b4" stroke-width="2.8" stroke-linecap="round" stroke-linejoin="round"/></svg>
<div class="box" style="left:698px;top:93.5px;width:2px;height:23.200000000000003px;background:#d8d8d8"></div>
<div class="box" style="left:1438px;top:78px;width:328px;height:54px;background:#d6e4fb"></div>
<svg class="a" style="left:745.3px;top:95.2px" width="24" height="20" viewBox="2.35 3.35 18.3 16.8" preserveAspectRatio="none"><path d="M13.543 3.41c4.114 2.47 6.545 7.162 5.549 11.131-.024.093-.05.181-.076.272l.002.001c2.062 2.538 1.5 5.258 1.236 4.745-1.072-2.086-3.066-1.568-4.088-1.043a6.803 6.803 0 0 1-.281.158l-.02.012-.002.002c-2.115 1.123-4.957 1.205-7.812-.022a12.568 12.568 0 0 1-5.64-4.838c.649.48 1.35.902 2.097 1.252 3.019 1.414 6.051 1.311 8.197-.002C9.651 12.73 7.101 9.67 5.146 7.191a10.628 10.628 0 0 1-1.005-1.384c2.34 2.142 6.038 4.83 7.365 5.576C8.69 8.408 6.208 4.743 6.324 4.86c4.436 4.47 8.528 6.996 8.528 6.996.154.085.27.154.36.213.085-.215.16-.437.224-.668.708-2.588-.09-5.548-1.893-7.992z" fill="#f07a47"/></svg>
<div class="t ui" style="left:781.30px;top:113.2px;letter-spacing:0.377px;">LandingView</div>
<div class="box" style="left:952px;top:93.5px;width:2px;height:23.200000000000003px;background:#d8d8d8"></div>
<svg class="a" style="left:1001.5px;top:95.2px" width="24" height="20" viewBox="2.35 3.35 18.3 16.8" preserveAspectRatio="none"><path d="M13.543 3.41c4.114 2.47 6.545 7.162 5.549 11.131-.024.093-.05.181-.076.272l.002.001c2.062 2.538 1.5 5.258 1.236 4.745-1.072-2.086-3.066-1.568-4.088-1.043a6.803 6.803 0 0 1-.281.158l-.02.012-.002.002c-2.115 1.123-4.957 1.205-7.812-.022a12.568 12.568 0 0 1-5.64-4.838c.649.48 1.35.902 2.097 1.252 3.019 1.414 6.051 1.311 8.197-.002C9.651 12.73 7.101 9.67 5.146 7.191a10.628 10.628 0 0 1-1.005-1.384c2.34 2.142 6.038 4.83 7.365 5.576C8.69 8.408 6.208 4.743 6.324 4.86c4.436 4.47 8.528 6.996 8.528 6.996.154.085.27.154.36.213.085-.215.16-.437.224-.668.708-2.588-.09-5.548-1.893-7.992z" fill="#f07a47"/></svg>
<div class="t ui" style="left:1037.20px;top:113.2px;letter-spacing:0.260px;">NewItemView</div>
<div class="box" style="left:1216px;top:93.5px;width:2px;height:23.200000000000003px;background:#d8d8d8"></div>
<svg class="a" style="left:1265.3px;top:95.2px" width="24" height="20" viewBox="2.35 3.35 18.3 16.8" preserveAspectRatio="none"><path d="M13.543 3.41c4.114 2.47 6.545 7.162 5.549 11.131-.024.093-.05.181-.076.272l.002.001c2.062 2.538 1.5 5.258 1.236 4.745-1.072-2.086-3.066-1.568-4.088-1.043a6.803 6.803 0 0 1-.281.158l-.02.012-.002.002c-2.115 1.123-4.957 1.205-7.812-.022a12.568 12.568 0 0 1-5.64-4.838c.649.48 1.35.902 2.097 1.252 3.019 1.414 6.051 1.311 8.197-.002C9.651 12.73 7.101 9.67 5.146 7.191a10.628 10.628 0 0 1-1.005-1.384c2.34 2.142 6.038 4.83 7.365 5.576C8.69 8.408 6.208 4.743 6.324 4.86c4.436 4.47 8.528 6.996 8.528 6.996.154.085.27.154.36.213.085-.215.16-.437.224-.668.708-2.588-.09-5.548-1.893-7.992z" fill="#f07a47"/></svg>
<div class="t ui" style="left:1301.50px;top:113.2px;letter-spacing:0.381px;">TodoItem</div>
<svg class="a" style="left:1485.6px;top:95.2px" width="24" height="20" viewBox="2.35 3.35 18.3 16.8" preserveAspectRatio="none"><path d="M13.543 3.41c4.114 2.47 6.545 7.162 5.549 11.131-.024.093-.05.181-.076.272l.002.001c2.062 2.538 1.5 5.258 1.236 4.745-1.072-2.086-3.066-1.568-4.088-1.043a6.803 6.803 0 0 1-.281.158l-.02.012-.002.002c-2.115 1.123-4.957 1.205-7.812-.022a12.568 12.568 0 0 1-5.64-4.838c.649.48 1.35.902 2.097 1.252 3.019 1.414 6.051 1.311 8.197-.002C9.651 12.73 7.101 9.67 5.146 7.191a10.628 10.628 0 0 1-1.005-1.384c2.34 2.142 6.038 4.83 7.365 5.576C8.69 8.408 6.208 4.743 6.324 4.86c4.436 4.47 8.528 6.996 8.528 6.996.154.085.27.154.36.213.085-.215.16-.437.224-.668.708-2.588-.09-5.548-1.893-7.992z" fill="#f07a47"/></svg>
<div class="t uib" style="left:1521.00px;top:113.2px;letter-spacing:0.613px;">TodoListViewModel</div>
<svg class="a" style="left:1813.2px;top:95.2px" width="24" height="20" viewBox="2.35 3.35 18.3 16.8" preserveAspectRatio="none"><path d="M13.543 3.41c4.114 2.47 6.545 7.162 5.549 11.131-.024.093-.05.181-.076.272l.002.001c2.062 2.538 1.5 5.258 1.236 4.745-1.072-2.086-3.066-1.568-4.088-1.043a6.803 6.803 0 0 1-.281.158l-.02.012-.002.002c-2.115 1.123-4.957 1.205-7.812-.022a12.568 12.568 0 0 1-5.64-4.838c.649.48 1.35.902 2.097 1.252 3.019 1.414 6.051 1.311 8.197-.002C9.651 12.73 7.101 9.67 5.146 7.191a10.628 10.628 0 0 1-1.005-1.384c2.34 2.142 6.038 4.83 7.365 5.576C8.69 8.408 6.208 4.743 6.324 4.86c4.436 4.47 8.528 6.996 8.528 6.996.154.085.27.154.36.213.085-.215.16-.437.224-.668.708-2.588-.09-5.548-1.893-7.992z" fill="#f07a47"/></svg>
<div class="t ui" style="left:1849.00px;top:113.2px;letter-spacing:0.204px;">ItemView</div>
<div class="box" style="left:1982px;top:93.5px;width:2px;height:23.200000000000003px;background:#d8d8d8"></div>
<div class="t uib" style="left:2034.60px;top:114.8px;letter-spacing:0;-webkit-text-stroke:.4px #2f6ff0;transform:scaleX(1.08);transform-origin:0 0;font-size:29px;">#</div>
<div class="t uii" style="left:2066.40px;top:113.2px;letter-spacing:0.545px;">Images are now downloaded…n the to-do item list. (1bccd29)</div>
<div class="box" style="left:2753px;top:93.5px;width:2px;height:23.200000000000003px;background:#d8d8d8"></div>
<svg class="a" style="left:2802.6px;top:95.2px" width="24" height="20" viewBox="2.35 3.35 18.3 16.8" preserveAspectRatio="none"><path d="M13.543 3.41c4.114 2.47 6.545 7.162 5.549 11.131-.024.093-.05.181-.076.272l.002.001c2.062 2.538 1.5 5.258 1.236 4.745-1.072-2.086-3.066-1.568-4.088-1.043a6.803 6.803 0 0 1-.281.158l-.02.012-.002.002c-2.115 1.123-4.957 1.205-7.812-.022a12.568 12.568 0 0 1-5.64-4.838c.649.48 1.35.902 2.097 1.252 3.019 1.414 6.051 1.311 8.197-.002C9.651 12.73 7.101 9.67 5.146 7.191a10.628 10.628 0 0 1-1.005-1.384c2.34 2.142 6.038 4.83 7.365 5.576C8.69 8.408 6.208 4.743 6.324 4.86c4.436 4.47 8.528 6.996 8.528 6.996.154.085.27.154.36.213.085-.215.16-.437.224-.668.708-2.588-.09-5.548-1.893-7.992z" fill="#f07a47"/></svg>
<div class="box" style="left:2836.4px;top:80px;width:7.4px;height:50px;overflow:hidden"><div class="t ui" style="left:0;top:33.2px">T</div></div>
<div class="box" style="left:2832px;top:78px;width:12px;height:54px;background:linear-gradient(90deg,rgba(0,0,0,0),rgba(0,0,0,.10))"></div>
<div class="box" style="left:2843px;top:78px;width:1.5px;height:54px;background:#cfcfcf"></div>
<div class="box" style="left:2844.5px;top:78px;width:180px;height:54px;background:#fff"></div>
<svg class="a" style="left:2858px;top:90px" width="30" height="30" viewBox="2858 90 30 30" ><g fill="none" stroke="#6d6d6d" stroke-width="2" stroke-linecap="round" stroke-linejoin="round"><path d="M2861 99.4 H2883 M2877 93.6 L2883 99.4 L2877 105.2"/><path d="M2883 111 H2861 M2867 105.2 L2861 111 L2867 116.8"/></g></svg>
<svg class="a" style="left:2904px;top:90px" width="40" height="30" viewBox="2904 90 40 30" ><path d="M2906 93.6H2931.4 M2906 99.5H2941.6 M2906 105.4H2931.4 M2906 111.3H2941.6 M2906 117.2H2941.6" stroke="#6d6d6d" stroke-width="1.9"/></svg>
<div class="box" style="left:2960px;top:93.5px;width:2px;height:23.200000000000003px;background:#d8d8d8"></div>
<svg class="a" style="left:2978px;top:90px" width="30" height="30" viewBox="2978 90 30 30" ><rect x="2981.2" y="93.2" width="23.4" height="23.4" rx="3.6" fill="none" stroke="#6d6d6d" stroke-width="2.2"/><path d="M2988.8 93.2V116.6" stroke="#6d6d6d" stroke-width="2.2"/><path d="M2992.4 105H3001 M2996.7 100.7V109.3" stroke="#6d6d6d" stroke-width="2" stroke-linecap="round"/></svg>
<svg class="a" style="left:563px;top:147.6px" width="25.4" height="25.4" viewBox="0 0 30 30" ><rect x="0" y="0" width="30" height="30" rx="6.5" fill="#3478f6"/><rect x="2.6" y="2.6" width="24.8" height="24.8" rx="4.2" fill="none" stroke="#fff" stroke-opacity=".75" stroke-width="1.4"/><g stroke="#fff" stroke-width="2.1" stroke-linecap="round" fill="none"><path d="M17 7.4 L10.2 19.4"/><path d="M13.3 7.8 L21.9 22.2"/><path d="M6.4 18.6 H16.6"/><path d="M20.4 18.6 H23.6"/><path d="M8.4 22 L8.0 22.7"/></g></svg>
<div class="t ui" style="left:600.70px;top:168.6px;letter-spacing:0.680px;">TodoList</div>
<svg class="a" style="left:700.6px;top:152.1px" width="7.6" height="19" viewBox="0 0 7.6 19" ><path d="M1.4 1 L6.0 9.5 L1.4 18" fill="none" stroke="#808080" stroke-width="2.3" stroke-linecap="round" stroke-linejoin="round"/></svg>
<svg class="a" style="left:725.2px;top:150.2px" width="25.2" height="19.8" viewBox="0 0 29 24" preserveAspectRatio="none"><path d="M0 5.2V3.2Q0 0 3.2 0H9.3Q11 0 12.2 1.1L13.3 2.1Q14.2 2.9 15.6 2.9H25.8Q29 2.9 29 6.1V7.5H0Z" fill="#8e9399"/><path d="M0 9.9H29V20.8Q29 24 25.8 24H3.2Q0 24 0 20.8Z" fill="#8e9399"/></svg>
<div class="t ui" style="left:762.80px;top:168.6px;letter-spacing:0.694px;">TodoList</div>
<svg class="a" style="left:862.4px;top:152.1px" width="7.6" height="19" viewBox="0 0 7.6 19" ><path d="M1.4 1 L6.0 9.5 L1.4 18" fill="none" stroke="#808080" stroke-width="2.3" stroke-linecap="round" stroke-linejoin="round"/></svg>
<svg class="a" style="left:887px;top:150.2px" width="25.2" height="19.8" viewBox="0 0 29 24" preserveAspectRatio="none"><path d="M0 5.2V3.2Q0 0 3.2 0H9.3Q11 0 12.2 1.1L13.3 2.1Q14.2 2.9 15.6 2.9H25.8Q29 2.9 29 6.1V7.5H0Z" fill="#8e9399"/><path d="M0 9.9H29V20.8Q29 24 25.8 24H3.2Q0 24 0 20.8Z" fill="#8e9399"/></svg>
<div class="t ui" style="left:924.80px;top:168.6px;letter-spacing:0.506px;">ViewModel</div>
<svg class="a" style="left:1049.6px;top:152.1px" width="7.6" height="19" viewBox="0 0 7.6 19" ><path d="M1.4 1 L6.0 9.5 L1.4 18" fill="none" stroke="#808080" stroke-width="2.3" stroke-linecap="round" stroke-linejoin="round"/></svg>
<svg class="a" style="left:1076px;top:151.4px" width="24" height="20" viewBox="2.35 3.35 18.3 16.8" preserveAspectRatio="none"><path d="M13.543 3.41c4.114 2.47 6.545 7.162 5.549 11.131-.024.093-.05.181-.076.272l.002.001c2.062 2.538 1.5 5.258 1.236 4.745-1.072-2.086-3.066-1.568-4.088-1.043a6.803 6.803 0 0 1-.281.158l-.02.012-.002.002c-2.115 1.123-4.957 1.205-7.812-.022a12.568 12.568 0 0 1-5.64-4.838c.649.48 1.35.902 2.097 1.252 3.019 1.414 6.051 1.311 8.197-.002C9.651 12.73 7.101 9.67 5.146 7.191a10.628 10.628 0 0 1-1.005-1.384c2.34 2.142 6.038 4.83 7.365 5.576C8.69 8.408 6.208 4.743 6.324 4.86c4.436 4.47 8.528 6.996 8.528 6.996.154.085.27.154.36.213.085-.215.16-.437.224-.668.708-2.588-.09-5.548-1.893-7.992z" fill="#f07a47"/></svg>
<div class="t ui" style="left:1112.60px;top:168.6px;letter-spacing:0.632px;">TodoListViewModel</div>
<svg class="a" style="left:1329px;top:152.1px" width="7.6" height="19" viewBox="0 0 7.6 19" ><path d="M1.4 1 L6.0 9.5 L1.4 18" fill="none" stroke="#808080" stroke-width="2.3" stroke-linecap="round" stroke-linejoin="round"/></svg>
<div class="box" style="left:1352px;top:146.4px;width:27.6px;height:27.4px;border-radius:6.5px;background:#3b7df5"></div>
<div class="t ui" style="left:1356.20px;top:168.8px;color:#fff;letter-spacing:0;-webkit-text-stroke:.7px #fff;font-size:23.6px;">M</div>
<div class="t ui" style="left:1390.60px;top:168.6px;letter-spacing:0.573px;">delete(_:)</div>
<svg class="a" style="left:2930px;top:148px" width="22" height="28" viewBox="2930 148 22 28" ><path d="M2945.6 151.4 L2935.4 161.4 L2945.6 171.4" fill="none" stroke="#6d6d6d" stroke-width="2.2" stroke-linecap="round" stroke-linejoin="round"/></svg>
<svg class="a" style="left:2958.8px;top:150.8px" width="22" height="20.6" viewBox="0 0 21 20.4" ><path d="M8.5 1.6 Q10.5 -1.2 12.5 1.6 L20.3 16 Q21.9 20.4 17.9 20.4 H3.1 Q-0.9 20.4 0.7 16 Z" fill="#f6b91f"/><path d="M10.5 5.6 V12.2" stroke="#fff" stroke-width="2.7" stroke-linecap="round"/><circle cx="10.5" cy="16.3" r="1.65" fill="#fff"/></svg>
<svg class="a" style="left:2988px;top:148px" width="22" height="28" viewBox="2988 148 22 28" ><path d="M2994.4 151.4 L3004.6 161.4 L2994.4 171.4" fill="none" stroke="#6d6d6d" stroke-width="2.2" stroke-linecap="round" stroke-linejoin="round"/></svg>
<div class="box" style="left:546px;top:188px;width:2478px;height:2px;background:#e0e0e0"></div>
<div class="box" id="code" style="left:546px;top:190px;width:2448px;height:1642px;overflow:hidden;background:#fff">
<div class="box" style="left:0;top:600px;width:2449px;height:44px;background:#edf4fe"></div>
<div class="box" style="left:106px;top:0px;width:14px;height:1644px;background:#e9e9e9;border-radius:0px 0px 0px 0px / 0px 0px 0px 0px;"></div>
<div class="box" style="left:106px;top:0px;width:14px;height:116px;background:#d4d4d4;border-radius:0px 0px 7px 7px / 0px 0px 5.5px 5.5px;box-shadow:0 1.3px 0 0 #ececec;"></div>
<div class="box" style="left:106px;top:292px;width:14px;height:1100px;background:#d5d5d5;border-radius:7px 7px 7px 7px / 5.5px 5.5px 5.5px 5.5px;box-shadow:0 -1.3px 0 0 #ececec,0 1.3px 0 0 #ececec;"></div>
<div class="box" style="left:106px;top:424px;width:14px;height:880px;background:#c1c1c1;border-radius:7px 7px 7px 7px / 5.5px 5.5px 5.5px 5.5px;box-shadow:0 -1.3px 0 0 #ececec,0 1.3px 0 0 #ececec;"></div>
<div class="box" style="left:106px;top:512px;width:14px;height:660px;background:#afafaf;border-radius:7px 7px 7px 7px / 5.5px 5.5px 5.5px 5.5px;box-shadow:0 -1.3px 0 0 #ececec,0 1.3px 0 0 #ececec;"></div>
<div class="box" style="left:106px;top:1061.4px;width:14px;height:2px;background:#e6e6e6"></div>
<div class="box" style="left:106px;top:600px;width:14px;height:44px;background:#a0a5af"></div>
<div class="box" style="left:106px;top:116px;width:14px;height:44px;background:#a1a1a1"></div>
<svg class="a" style="left:109.4px;top:132.4px" width="8" height="12" viewBox="0 0 8 12" ><path d="M1.6 1.6 L5.8 6 L1.6 10.4" fill="none" stroke="#fff" stroke-width="1.9" stroke-linecap="round" stroke-linejoin="round"/></svg>
<div class="box" style="left:106px;top:204px;width:14px;height:44px;background:#a1a1a1"></div>
<svg class="a" style="left:109.4px;top:220.4px" width="8" height="12" viewBox="0 0 8 12" ><path d="M1.6 1.6 L5.8 6 L1.6 10.4" fill="none" stroke="#fff" stroke-width="1.9" stroke-linecap="round" stroke-linejoin="round"/></svg>
<div class="box" style="left:106px;top:1436px;width:14px;height:44px;background:#a1a1a1"></div>
<svg class="a" style="left:109.4px;top:1452.4px" width="8" height="12" viewBox="0 0 8 12" ><path d="M1.6 1.6 L5.8 6 L1.6 10.4" fill="none" stroke="#fff" stroke-width="1.9" stroke-linecap="round" stroke-linejoin="round"/></svg>
<div class="box" style="left:106px;top:1524px;width:14px;height:44px;background:#a1a1a1"></div>
<svg class="a" style="left:109.4px;top:1540.4px" width="8" height="12" viewBox="0 0 8 12" ><path d="M1.6 1.6 L5.8 6 L1.6 10.4" fill="none" stroke="#fff" stroke-width="1.9" stroke-linecap="round" stroke-linejoin="round"/></svg>
<div class="ln" style="left:14px;top:26px">97</div>
<div class="cl" style="left:144.60000000000002px;top:29px">    <span class="c">// We mark the function as &quot;private&quot; meaning it can only be invoked from inside</span></div>
<div class="ln" style="left:14px;top:70px">98</div>
<div class="cl" style="left:144.60000000000002px;top:73px">    <span class="c">// the view model itself (it will not be accessible from the view layer)</span></div>
<div class="ln" style="left:14px;top:114px">99</div>
<div class="cl" style="left:144.60000000000002px;top:117px">    <span class="k">private</span> <span class="k">func</span> <span class="fd">uploadImage</span>(<span class="fd">_</span> image: <span class="pt">TodoItemImage</span>?) <span class="k">async</span> <span class="k">throws</span> -> <span class="ot">String</span>? {<span class="fp"><i style="left:8.8px"></i><i style="left:25.8px"></i><i style="left:42.8px"></i></span>}</div>
<div class="ln" style="left:14px;top:158px">121</div>
<div class="ln" style="left:14px;top:202px">122</div>
<div class="cl" style="left:144.60000000000002px;top:205px">    <span class="k">func</span> <span class="fd">downloadTodoItemImage</span>(<span class="fd">fromPath</span> path: <span class="ot">String</span>) <span class="k">async</span> <span class="k">throws</span> -> <span class="pt">TodoItemImage</span>? {<span class="fp"><i style="left:8.8px"></i><i style="left:25.8px"></i><i style="left:42.8px"></i></span>}</div>
<div class="ln" style="left:14px;top:246px">141</div>
<div class="ln" style="left:14px;top:290px">142</div>
<div class="cl" style="left:144.60000000000002px;top:293px">    <span class="k">func</span> <span class="fd">delete</span>(<span class="fd">_</span> todo: <span class="pt">TodoItem</span>) {</div>
<div class="ln" style="left:14px;top:334px">143</div>
<div class="ln" style="left:14px;top:378px">144</div>
<div class="cl" style="left:144.60000000000002px;top:381px">        <span class="c">// Create a unit of asynchronous work to add the to-do item</span></div>
<div class="ln" style="left:14px;top:422px">145</div>
<div class="cl" style="left:144.60000000000002px;top:425px">        <span class="ot">Task</span> {</div>
<div class="ln" style="left:14px;top:466px">146</div>
<div class="ln" style="left:14px;top:510px">147</div>
<div class="cl" style="left:144.60000000000002px;top:513px">            <span class="k">do</span> {</div>
<div class="ln" style="left:14px;top:554px">148</div>
<div class="ln cur" style="left:14px;top:598px">149</div>
<div class="cl" style="left:144.60000000000002px;top:601px">                <span class="c">// Run the delete command</span></div>
<div class="ln" style="left:14px;top:642px">150</div>
<div class="cl" style="left:144.60000000000002px;top:645px">                <span class="k">try</span> <span class="k">await</span> <span class="pf">supabase</span></div>
<div class="ln" style="left:14px;top:686px">151</div>
<div class="cl" style="left:144.60000000000002px;top:689px">                    .<span class="pf">from</span>(<span class="s">&quot;todos&quot;</span>)</div>
<div class="ln" style="left:14px;top:730px">152</div>
<div class="cl" style="left:144.60000000000002px;top:733px">                    .<span class="of">delete</span>()</div>
<div class="ln" style="left:14px;top:774px">153</div>
<div class="cl" style="left:144.60000000000002px;top:777px">                    .eq(<span class="s">&quot;id&quot;</span>, value: todo.<span class="pf">id</span>!)  <span class="c">// Only delete the row whose id</span></div>
<div class="ln" style="left:14px;top:818px">154</div>
<div class="cl" style="left:144.60000000000002px;top:821px">                    .execute()                  <span class="c">// matches that of the to-do being deleted</span></div>
<div class="ln" style="left:14px;top:862px">155</div>
<div class="ln" style="left:14px;top:906px">156</div>
<div class="cl" style="left:144.60000000000002px;top:909px">                <span class="c">// Update the list of to-do items held in memory to reflect the deletion</span></div>
<div class="ln" style="left:14px;top:950px">157</div>
<div class="cl" style="left:144.60000000000002px;top:953px">                <span class="k">try</span> <span class="k">await</span> <span class="k">self</span>.<span class="pf">getTodos</span>()</div>
<div class="ln" style="left:14px;top:994px">158</div>
<div class="ln" style="left:14px;top:1038px">159</div>
<div class="cl" style="left:144.60000000000002px;top:1041px">            } <span class="k">catch</span> {</div>
<div class="ln" style="left:14px;top:1082px">160</div>
<div class="cl" style="left:144.60000000000002px;top:1085px">                <span class="of">debugPrint</span>(error)</div>
<div class="ln" style="left:14px;top:1126px">161</div>
<div class="cl" style="left:144.60000000000002px;top:1129px">            }</div>
<div class="ln" style="left:14px;top:1170px">162</div>
<div class="ln" style="left:14px;top:1214px">163</div>
<div class="ln" style="left:14px;top:1258px">164</div>
<div class="cl" style="left:144.60000000000002px;top:1261px">        }</div>
<div class="ln" style="left:14px;top:1302px">165</div>
<div class="ln" style="left:14px;top:1346px">166</div>
<div class="cl" style="left:144.60000000000002px;top:1349px">    }</div>
<div class="ln" style="left:14px;top:1390px">167</div>
<div class="ln" style="left:14px;top:1434px">168</div>
<div class="cl" style="left:144.60000000000002px;top:1437px">    <span class="k">func</span> <span class="fd">update</span>(<span class="fd">todo</span> updatedTodo: <span class="pt">TodoItem</span>) {<span class="fp"><i style="left:8.8px"></i><i style="left:25.8px"></i><i style="left:42.8px"></i></span>}</div>
<div class="ln" style="left:14px;top:1478px">189</div>
<div class="ln" style="left:14px;top:1522px">190</div>
<div class="cl" style="left:144.60000000000002px;top:1525px">    <span class="k">func</span> <span class="fd">filterTodos</span>(<span class="fd">on</span> searchTerm: <span class="ot">String</span>) <span class="k">async</span> <span class="k">throws</span> {<span class="fp"><i style="left:8.8px"></i><i style="left:25.8px"></i><i style="left:42.8px"></i></span>}</div>
<div class="ln" style="left:14px;top:1566px">220</div>
<div class="ln" style="left:14px;top:1610px">221</div>
<div class="cl" style="left:144.60000000000002px;top:1613px">}</div>
<div class="box" style="left:0;top:44px;width:2449px;height:17px;background:linear-gradient(rgba(0,0,0,.075),rgba(0,0,0,.03) 35%,rgba(0,0,0,0))"></div>
<div class="box" style="left:0;top:0;width:2449px;height:42px;background:#f3f3f3;border-bottom:2px solid #d3d3d3"></div>
<div class="ln" style="left:14px;top:-2px">12</div>
<div class="cl" style="left:144.60000000000002px;top:1px"><span class="k">class</span> <span class="td">TodoListViewModel</span> {</div>
</div>
<div class="box" style="left:2994px;top:190px;width:30px;height:1642px;background:#fafafa;border-left:2px solid #e8e8e8;border-right:1.6px solid #ececec;box-sizing:border-box"></div>
<div class="box" style="left:3002.4px;top:752px;width:16px;height:729.4px;border-radius:8px;background:#7f7f7f"></div>
<div class="box" style="left:546px;top:1832px;width:2478px;height:2px;background:#dedede"></div>
<div class="box" style="left:546px;top:1834px;width:2478px;height:54px;background:#fff"></div>
<svg class="a" style="left:568px;top:1850px" width="32" height="22" viewBox="568 1850 32 22" ><path d="M572.4 1852 H589.6 Q591.4 1852 592.5 1853.4 L597.8 1859.6 Q598.8 1861 597.8 1862.4 L592.5 1868.6 Q591.4 1870 589.6 1870 H572.4 Q569.2 1870 569.2 1866.8 V1855.2 Q569.2 1852 572.4 1852Z" fill="#3478f6"/></svg>
<div class="box" style="left:614px;top:1849.8px;width:2px;height:22.799999999999955px;background:#dadada"></div>
<svg class="a" style="left:634px;top:1846px" width="24" height="30" viewBox="634 1846 24 30" ><rect x="637.9" y="1849" width="4.4" height="24" rx="1.2" fill="none" stroke="#6e6e6e" stroke-width="1.7"/><rect x="649.9" y="1849" width="4.4" height="24" rx="1.2" fill="none" stroke="#6e6e6e" stroke-width="1.7"/></svg>
<svg class="a" style="left:690px;top:1848px" width="34" height="28" viewBox="690 1848 34 28" ><g fill="none" stroke="#c2c2c2" stroke-width="1.9" stroke-linejoin="round" stroke-linecap="round"><path d="M694.4 1864 L706.4 1853 L718.6 1864.6"/><path d="M712.2 1865.4 H719 V1858.6"/><rect x="697.4" y="1869.2" width="16.6" height="4"/></g></svg>
<svg class="a" style="left:754px;top:1846px" width="24" height="30" viewBox="754 1846 24 30" ><g fill="none" stroke="#c2c2c2" stroke-width="1.9" stroke-linejoin="round" stroke-linecap="round"><path d="M766 1848.6 V1865.4 M759.6 1859.2 L766 1865.6 L772.4 1859.2"/><rect x="757.8" y="1869.2" width="16.6" height="4"/></g></svg>
<svg class="a" style="left:814px;top:1846px" width="24" height="30" viewBox="814 1846 24 30" ><g fill="none" stroke="#c2c2c2" stroke-width="1.9" stroke-linejoin="round" stroke-linecap="round"><path d="M825.8 1865.6 V1849 M819.4 1855.2 L825.8 1848.8 L832.2 1855.2"/><rect x="817.6" y="1869.2" width="16.6" height="4"/></g></svg>
<div class="box" style="left:856.4px;top:1849.8px;width:2px;height:22.799999999999955px;background:#dadada"></div>
<svg class="a" style="left:874px;top:1846px" width="30" height="32" viewBox="874 1846 30 32" ><g fill="none" stroke="#6e6e6e" stroke-width="1.9" stroke-linejoin="round"><path d="M886.4 1858.6 L898.6 1853.4 V1868.6 L886.4 1873.8 Z"/><path d="M882.2 1870 V1856 L894.6 1850.8"/><path d="M878.2 1866.6 V1853.4 L890.6 1848.6"/></g></svg>
<svg class="a" style="left:932px;top:1846px" width="32" height="30" viewBox="932 1846 32 30" ><g fill="none" stroke="#6e6e6e" stroke-width="2"><circle cx="940" cy="1853.2" r="4"/><circle cx="940" cy="1869" r="4"/><circle cx="956.4" cy="1861" r="4"/><path d="M943.6 1855 L952.8 1859.4 M943.6 1867.2 L952.8 1862.8"/></g></svg>
<svg class="a" style="left:994px;top:1846px" width="28" height="30" viewBox="994 1846 28 30" ><g fill="none" stroke="#6e6e6e" stroke-width="2"><rect x="997.2" y="1849.4" width="21" height="10.4" rx="5.2"/><rect x="997.2" y="1862.8" width="21" height="10.4" rx="5.2"/></g><circle cx="1003" cy="1854.6" r="2.7" fill="#6e6e6e"/><circle cx="1012.6" cy="1868" r="2.7" fill="#6e6e6e"/></svg>
<svg class="a" style="left:1053px;top:1846px" width="30" height="30" viewBox="1053 1846 30 30" ><path d="M1056.6 1859.4 L1080 1849.4 L1070.4 1873 L1068.2 1861.6 Z" fill="none" stroke="#6e6e6e" stroke-width="2" stroke-linejoin="round"/></svg>
<div class="box" style="left:1098px;top:1849.8px;width:2px;height:22.799999999999955px;background:#dadada"></div>
<svg class="a" style="left:1118px;top:1848.8px" width="23.4" height="23.4" viewBox="0 0 30 30" ><rect x="0" y="0" width="30" height="30" rx="5.6" fill="#7b7b7b"/><g stroke="#fff" stroke-width="2.1" stroke-linecap="round" fill="none"><path d="M17.3 6.9 L10.1 19.4"/><path d="M13 7.3 L22.3 22.1"/><path d="M5.8 18.3 H16.6"/><path d="M20.6 18.3 H24.2"/><path d="M8.2 22 L7.7 22.8"/></g></svg>
<div class="t ui" style="left:1155.00px;top:1868.6px;letter-spacing:0.637px;">TodoList</div>
<div class="t stat" style="left:2747.30px;top:1869px;letter-spacing:0.712px;">Line: 149  Col: 20</div>
<div class="box" style="left:2954px;top:1849.8px;width:2px;height:22.799999999999955px;background:#dadada"></div>
<svg class="a" style="left:2970px;top:1846px" width="32" height="30" viewBox="2970 1846 32 30" ><rect x="2974.4" y="1849.6" width="23.4" height="22.8" rx="4" fill="none" stroke="#6e6e6e" stroke-width="2.2"/><rect x="2977.8" y="1864.4" width="16.6" height="4.8" rx="1.4" fill="#6e6e6e"/></svg>
</div></body></html>
